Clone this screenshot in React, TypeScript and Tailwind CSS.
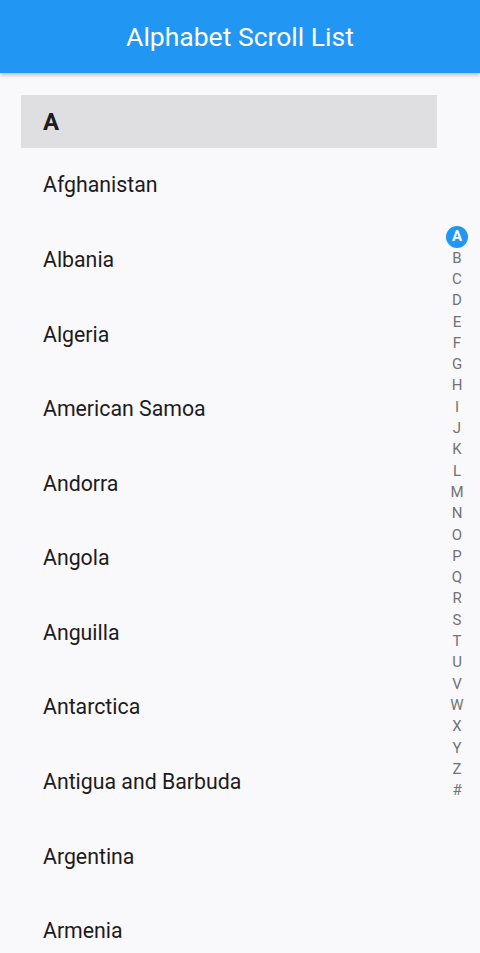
const countries = [
  "Afghanistan",
  "Albania",
  "Algeria",
  "American Samoa",
  "Andorra",
  "Angola",
  "Anguilla",
  "Antarctica",
  "Antigua and Barbuda",
  "Argentina",
  "Armenia",
];

const letters = "ABCDEFGHIJKLMNOPQRSTUVWXYZ#".split("");

export default function App() {
  return (
    <div className="h-[953px] overflow-hidden bg-[#f9f8fb] font-['Roboto',sans-serif]">
      <header className="relative z-10 flex h-[73px] items-center justify-center bg-[#2196f3] shadow-[0_2px_4px_rgba(0,0,0,0.25)]">
        <h1 className="text-[26.5px] font-normal text-white">Alphabet Scroll List</h1>
      </header>
      <div className="flex">
        <div className="w-[416px] pl-[21px] pt-[22px] box-content">
          <div className="flex h-[53px] items-center bg-[#dfdee1] px-[22px]">
            <span className="text-[24px] font-bold text-[#1d1b20]">A</span>
          </div>
          {countries.map((c) => (
            <div key={c} className="flex h-[74.6px] items-center px-[22px]">
              <span className="text-[21.3px] text-[#1d1b20]">{c}</span>
            </div>
          ))}
        </div>
        <div className="ml-[9px] flex w-[22px] flex-col items-center pt-[153px]">
          {letters.map((l, i) => (
            <div key={l} className="flex h-[21.3px] w-[22px] items-center justify-center">
              {i === 0 ? (
                <span className="flex h-[22px] w-[22px] items-center justify-center rounded-full bg-[#2196f3] text-[15px] font-bold text-white">
                  {l}
                </span>
              ) : (
                <span className="text-[15px] text-[#737373]">{l}</span>
              )}
            </div>
          ))}
        </div>
      </div>
    </div>
  );
}
